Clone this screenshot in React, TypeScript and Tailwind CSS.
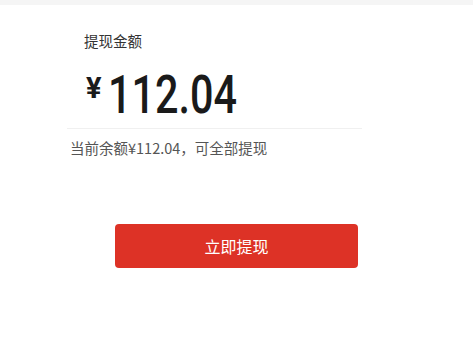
export default function App() {
  const cjk = { fontFamily: '"Noto Sans CJK SC", "Noto Sans", sans-serif' };
  const num = { fontFamily: 'Roboto, "Liberation Sans", sans-serif' };
  return (
    <div className="w-[473px] h-[363px] bg-white" style={cjk}>
      <div className="h-[5px] bg-[#f5f5f5]" />
      <div className="ml-[67px] w-[295px]">
        <div className="pt-[26px] pl-[17px] text-[14.5px] leading-[20px] text-[#333]">提现金额</div>
        <div className="mt-[18px] pl-[19px] pb-[6px] flex items-start border-b border-[#f0f0f0]">
          <span className="mt-[5px] w-[22px] text-[29px] leading-none font-bold text-[#1a1a1a]" style={num}>
            ¥
          </span>
          <span
            className="block origin-left scale-x-[0.78] text-[53px] leading-none font-medium text-[#1a1a1a] whitespace-nowrap"
            style={num}
          >
            112.04
          </span>
        </div>
        <div className="mt-[9px] pl-[3px] text-[14.5px] leading-[20px] text-[#555]">当前余额¥112.04，可全部提现</div>
      </div>
      <div className="mt-[66px] flex justify-center">
        <button className="w-[243px] h-[44px] rounded-[4px] bg-[#dd3226] text-white text-[16px]">立即提现</button>
      </div>
    </div>
  );
}
